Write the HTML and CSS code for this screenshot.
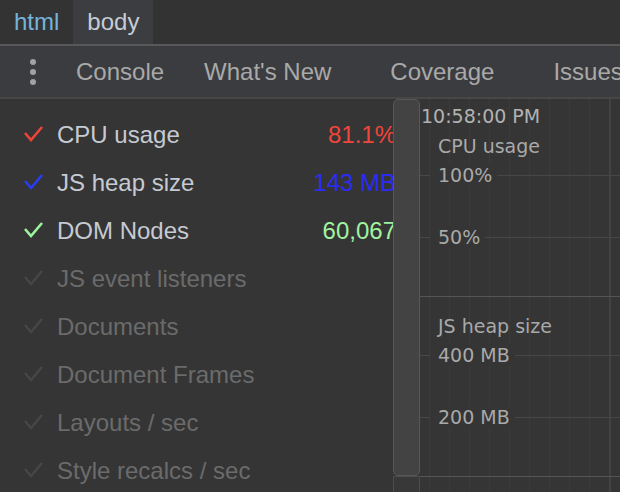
FILE: index.html
```html
<!DOCTYPE html>
<html>
<head>
<meta charset="utf-8">
<link rel="stylesheet" href="styles.css">
</head>
<body>
<div class="crumbs">
  <span class="crumb crumb-html">html</span>
  <span class="crumb crumb-body">body</span>
</div>
<div class="tabbar">
  <div class="menu"><i></i><i></i><i></i></div>
  <span class="tab">Console</span>
  <span class="tab closeable">What's New</span>
  <span class="tab closeable">Coverage</span>
  <span class="tab">Issues</span>
</div>
<div class="main">
  <div class="list">
    <div class="row on red"><svg class="check" viewBox="0 0 21 18"><path d="M2 8 L8 15 L19 2"/></svg><span class="label">CPU usage</span><span class="value">81.1%</span></div>
    <div class="row on blue"><svg class="check" viewBox="0 0 21 18"><path d="M2 8 L8 15 L19 2"/></svg><span class="label">JS heap size</span><span class="value">143 MB</span></div>
    <div class="row on green"><svg class="check" viewBox="0 0 21 18"><path d="M2 8 L8 15 L19 2"/></svg><span class="label">DOM Nodes</span><span class="value">60,067</span></div>
    <div class="row off"><svg class="check" viewBox="0 0 21 18"><path d="M2 8 L8 15 L19 2"/></svg><span class="label">JS event listeners</span></div>
    <div class="row off"><svg class="check" viewBox="0 0 21 18"><path d="M2 8 L8 15 L19 2"/></svg><span class="label">Documents</span></div>
    <div class="row off"><svg class="check" viewBox="0 0 21 18"><path d="M2 8 L8 15 L19 2"/></svg><span class="label">Document Frames</span></div>
    <div class="row off"><svg class="check" viewBox="0 0 21 18"><path d="M2 8 L8 15 L19 2"/></svg><span class="label">Layouts / sec</span></div>
    <div class="row off"><svg class="check" viewBox="0 0 21 18"><path d="M2 8 L8 15 L19 2"/></svg><span class="label">Style recalcs / sec</span></div>
  </div>
  <div class="scrollbar">
    <div class="thumb"></div>
    <div class="track"></div>
  </div>
  <div class="chart">
    <div class="time">10:58:00 PM</div>
    <div class="section">
      <div class="title">CPU usage</div>
      <div class="grid first"><span class="gl">100%</span></div>
      <div class="grid second"><span class="gl">50%</span></div>
    </div>
    <div class="section">
      <div class="title">JS heap size</div>
      <div class="grid first"><span class="gl">400 MB</span></div>
      <div class="grid second"><span class="gl">200 MB</span></div>
    </div>
  </div>
</div>
</body>
</html>
```
FILE: styles.css
```css
html, body {
  margin: 0;
  padding: 0;
}
body {
  width: 620px;
  height: 492px;
  overflow: hidden;
  background: #353535;
  font-family: "Liberation Sans", Arial, sans-serif;
  font-size: 24px;
}
.crumbs {
  display: flex;
  height: 44px;
  background: #333333;
  border-bottom: 2px solid #585858;
}
.crumb {
  display: flex;
  align-items: center;
  padding: 0 14px;
  line-height: 44px;
}
.crumb-html {
  color: #74b4dc;
}
.crumb-body {
  color: #c6ccd6;
  background: #3c3d41;
}
.tabbar {
  display: flex;
  align-items: center;
  height: 51px;
  background: #3b3c3f;
  border-bottom: 2px solid #474747;
}
.menu {
  display: flex;
  flex-direction: column;
  gap: 4px;
  margin-left: 30px;
  margin-right: 20px;
}
.menu i {
  display: block;
  width: 6px;
  height: 6px;
  border-radius: 50%;
  background: #a2a2a2;
}
.tab {
  color: #a9a9a9;
  padding: 0 20px;
  white-space: nowrap;
}
.tab.closeable {
  padding-right: 39px;
}
.main {
  display: flex;
  height: 393px;
}
.list {
  width: 393px;
  overflow: hidden;
  padding-top: 12px;
  flex: none;
}
.row {
  display: flex;
  align-items: center;
  height: 48px;
  padding-left: 23px;
  white-space: nowrap;
}
.check {
  width: 21px;
  height: 18px;
  flex: none;
  margin-right: 13px;
  margin-top: -2px;
}
.check path {
  fill: none;
  stroke-width: 2.6;
  stroke-linecap: butt;
  stroke-linejoin: miter;
}
.label {
  flex: 1;
  color: #c6cad2;
}
.value {
  margin-right: -3px;
}
.red path { stroke: #ef4437; }
.red .value { color: #f2453a; }
.blue path { stroke: #2a3cf2; }
.blue .value { color: #2a2cf6; }
.green path { stroke: #9cf59c; }
.green .value { color: #a0f4a0; }
.off .label { color: #6b6b6b; }
.off path { stroke: #464646; }
.scrollbar {
  width: 27px;
  flex: none;
  display: flex;
  flex-direction: column;
}
.thumb {
  height: 375px;
  background: #434343;
  border: 1px solid #585858;
  border-radius: 5px;
}
.track {
  flex: 1;
  background: #383838;
  border-left: 1px solid #4c4c4c;
  border-right: 1px solid #4c4c4c;
  border-top: 1px solid #4c4c4c;
}
.chart {
  position: relative;
  flex: 1;
  padding-top: 18px;
  font-family: "DejaVu Sans", Verdana, sans-serif;
  font-size: 19px;
  color: #a9a9a9;
  background:
    linear-gradient(to right, transparent 189px, #434343 189px, #434343 191px, transparent 191px),
    repeating-linear-gradient(to right, transparent 0, transparent 9px, #3b3b3b 9px, #3b3b3b 10px, transparent 10px, transparent 20px),
    #353535;
}
.time {
  position: absolute;
  top: 6px;
  left: 1px;
  line-height: 22px;
  color: #b2b2b2;
}
.section {
  height: 179px;
  border-bottom: 1px solid #555555;
  padding-top: 18px;
  box-sizing: border-box;
  height: 180px;
}
.title {
  line-height: 22px;
  padding-left: 18px;
}
.grid {
  display: flex;
  align-items: center;
  height: 22px;
}
.grid::before {
  content: "";
  width: 10px;
  height: 1px;
  background: #474747;
}
.grid::after {
  content: "";
  flex: 1;
  height: 1px;
  background: #474747;
}
.grid.first {
  margin-top: 7px;
}
.grid.second {
  margin-top: 40px;
}
.gl {
  padding: 0 5px 0 8px;
  background: #353535;
  line-height: 22px;
}
```
